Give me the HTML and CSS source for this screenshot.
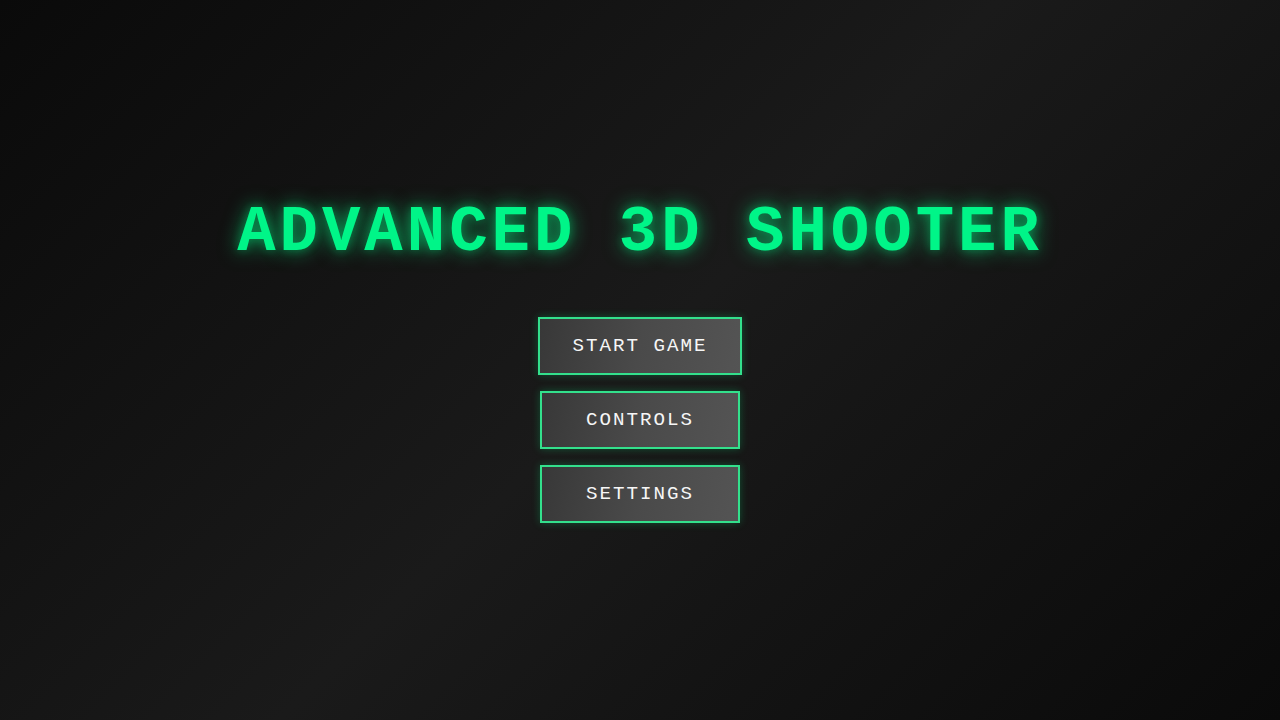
FILE: index.html
```html
<!DOCTYPE html>
<html lang="en">
<head>
<meta charset="utf-8">
<title>Advanced 3D Shooter</title>
<link rel="stylesheet" href="styles.css">
</head>
<body>
  <main class="menu">
    <h1 class="title">ADVANCED 3D SHOOTER</h1>
    <nav class="menu-buttons">
      <button class="menu-btn" type="button">START GAME</button>
      <button class="menu-btn" type="button">CONTROLS</button>
      <button class="menu-btn" type="button">SETTINGS</button>
    </nav>
  </main>
</body>
</html>
```

FILE: styles.css
```css
html, body {
  margin: 0;
  padding: 0;
  height: 100%;
}

body {
  background: linear-gradient(135deg, #0a0a0a 0%, #1a1a1a 50%, #0a0a0a 100%);
  font-family: "Liberation Mono", "Courier New", monospace;
  color: #fff;
  overflow: hidden;
}

.menu {
  height: 100vh;
  display: flex;
  flex-direction: column;
  align-items: center;
  justify-content: center;
}

.title {
  margin: 0 0 48px;
  font-size: 64px;
  font-weight: bold;
  letter-spacing: 4px;
  color: #00f588;
  text-shadow: 0 0 20px rgba(0, 255, 136, 0.6), 0 0 10px rgba(0, 255, 136, 0.3);
}

.menu-buttons {
  display: flex;
  flex-direction: column;
  align-items: center;
  gap: 16px;
}

.menu-btn {
  box-sizing: border-box;
  min-width: 200px;
  padding: 16px 32px;
  font-family: inherit;
  font-size: 19.2px;
  letter-spacing: 2px;
  color: #f6f6f6;
  background: linear-gradient(100deg, #383838 0%, #4a4a4a 50%, #545454 100%);
  border: 2px solid #33e08c;
  box-shadow: 0 0 8px rgba(0, 255, 136, 0.25);
  cursor: pointer;
}
```
